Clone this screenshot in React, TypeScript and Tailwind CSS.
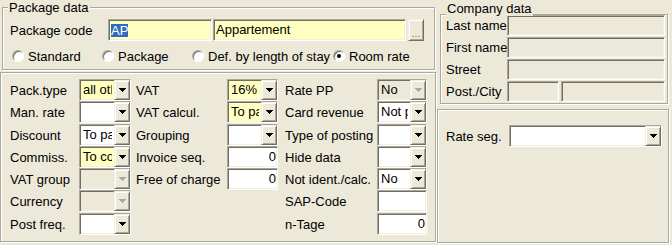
import React from "react";

const sunken =
  "border border-t-[#ACA899] border-l-[#ACA899] border-b-white border-r-white shadow-[inset_1px_1px_0_#716F64,inset_-1px_-1px_0_#F1EFE2]";
const raised =
  "border border-t-[#F1EFE2] border-l-[#F1EFE2] border-b-[#716F64] border-r-[#716F64] shadow-[inset_1px_1px_0_#ffffff,inset_-1px_-1px_0_#ACA899]";
const etched =
  "border border-[#ACA899] shadow-[inset_1px_1px_0_#ffffff,1px_1px_0_#ffffff]";

function Arrow({ disabled }: { disabled?: boolean }) {
  return (
    <svg width="7" height="4" shapeRendering="crispEdges">
      <path d="M0 0h7v1H0zM1 1h5v1H1zM2 2h3v1H2zM3 3h1v1H3z" fill={disabled ? "#ACA899" : "#000000"} />
    </svg>
  );
}

function Combo({
  value = "",
  bg = "bg-white",
  w,
  disabled,
}: {
  value?: string;
  bg?: string;
  w: string;
  disabled?: boolean;
}) {
  return (
    <div className={`flex h-[22px] shrink-0 ${w} ${sunken} ${bg}`}>
      <span className="mr-[2px] min-w-0 flex-1 overflow-hidden whitespace-nowrap pl-[3px] leading-[20px]">{value}</span>
      <span className={`flex w-[16px] shrink-0 items-center justify-center bg-[#ECE9D8] ${raised}`}>
        <Arrow disabled={disabled} />
      </span>
    </div>
  );
}

function TextBox({ value = "", w, bg = "bg-white" }: { value?: string; w: string; bg?: string }) {
  return (
    <div className={`h-[22px] shrink-0 overflow-hidden whitespace-nowrap pr-[1px] text-right leading-[20px] ${w} ${sunken} ${bg}`}>
      {value}
    </div>
  );
}

function Radio({ label, checked, w }: { label: string; checked?: boolean; w: string }) {
  return (
    <div className={`flex items-center ${w}`}>
      <span className="flex h-[12px] w-[12px] shrink-0 items-center justify-center rounded-full border border-t-[#ACA899] border-l-[#ACA899] border-b-white border-r-white bg-white shadow-[inset_1px_1px_0_#716F64]">
        {checked && <span className="block h-[4px] w-[4px] rounded-full bg-black" />}
      </span>
      <span className="ml-[4px] whitespace-nowrap">{label}</span>
    </div>
  );
}

type Field = { label: string; el: React.ReactNode };

function Column({ fields, labelW, ml }: { fields: Field[]; labelW: string; ml: string }) {
  return (
    <div className={`flex flex-col ${ml}`}>
      {fields.map((f, i) => (
        <div key={i} className={`flex h-[22px] items-center ${i === 2 || i === 6 ? "mt-[1px]" : ""}`}>
          <span className={`shrink-0 whitespace-nowrap ${labelW}`}>{f.label}</span>
          {f.el}
        </div>
      ))}
    </div>
  );
}

export default function App() {
  const col1: Field[] = [
    { label: "Pack.type", el: <Combo w="w-[52px]" bg="bg-[#FFFFC0]" value="all other" /> },
    { label: "Man. rate", el: <Combo w="w-[52px]" /> },
    { label: "Discount", el: <Combo w="w-[52px]" value="To pay" /> },
    { label: "Commiss.", el: <Combo w="w-[52px]" bg="bg-[#FFFFC0]" value="To comm." /> },
    { label: "VAT group", el: <Combo w="w-[52px]" bg="bg-[#ECE9D8]" disabled /> },
    { label: "Currency", el: <Combo w="w-[52px]" bg="bg-[#ECE9D8]" disabled /> },
    { label: "Post freq.", el: <Combo w="w-[52px]" /> },
  ];
  const col2: Field[] = [
    { label: "VAT", el: <Combo w="w-[51px]" bg="bg-[#FFFFC0]" value="16%" /> },
    { label: "VAT calcul.", el: <Combo w="w-[51px]" bg="bg-[#FFFFC0]" value="To pay" /> },
    { label: "Grouping", el: <Combo w="w-[51px]" /> },
    { label: "Invoice seq.", el: <TextBox w="w-[51px]" value="0" /> },
    { label: "Free of charge", el: <TextBox w="w-[51px]" value="0" /> },
  ];
  const col3: Field[] = [
    { label: "Rate PP", el: <Combo w="w-[50px]" bg="bg-[#ECE9D8]" value="No" disabled /> },
    { label: "Card revenue", el: <Combo w="w-[50px]" value="Not posted" /> },
    { label: "Type of posting", el: <Combo w="w-[50px]" /> },
    { label: "Hide data", el: <Combo w="w-[50px]" /> },
    { label: "Not ident./calc.", el: <Combo w="w-[50px]" value="No" /> },
    { label: "SAP-Code", el: <TextBox w="w-[50px]" /> },
    { label: "n-Tage", el: <TextBox w="w-[50px]" value="0" /> },
  ];

  return (
    <div className="flex h-[245px] w-[672px] overflow-hidden bg-[#ECE9D8] font-['Liberation_Sans',Arial,sans-serif] text-[13px] leading-[15px] text-black">
      {/* Left column */}
      <div className="flex w-[437px] shrink-0 flex-col">
        <fieldset className={`ml-[2px] h-[70px] w-[433px] ${etched}`}>
          <legend className="ml-[5px] bg-[#ECE9D8] px-[1px] leading-[15px]">Package data</legend>
          <div className="mt-[4px] flex items-center pl-[7px]">
            <span className="w-[98px] shrink-0">Package code</span>
            <div className={`flex h-[22px] w-[104px] items-center pl-[2px] ${sunken} bg-[#FFFFC0]`}>
              <span className="inline-block bg-[#316AC5] leading-[13px] text-white">AP</span>
            </div>
            <div className={`ml-[1px] h-[22px] w-[193px] pl-[2px] leading-[20px] ${sunken} bg-[#FFFFC0]`}>
              Appartement
            </div>
            <div className={`ml-[2px] flex h-[22px] w-[16px] items-end justify-center pb-[3px] ${raised} bg-[#ECE9D8]`}>
              <span className="text-[11px] leading-[8px] text-[#B07830]">...</span>
            </div>
          </div>
          <div className="mt-[8px] flex h-[14px] items-center pl-[9px]">
            <Radio w="w-[90px]" label="Standard" />
            <Radio w="w-[90px]" label="Package" />
            <Radio w="w-[141px]" label="Def. by length of stay" />
            <Radio w="w-[80px]" label="Room rate" checked />
          </div>
        </fieldset>

        <div className={`mt-[2px] flex h-[170px] w-[436px] pt-[6px] ${etched}`}>
          <Column fields={col1} labelW="w-[69px]" ml="ml-[9px]" />
          <Column fields={col2} labelW="w-[91px]" ml="ml-[5px]" />
          <Column fields={col3} labelW="w-[92px]" ml="ml-[7px]" />
        </div>
      </div>

      {/* Right column */}
      <div className="flex flex-1 flex-col">
        <div className={`relative ml-[3px] mt-[14px] h-[90px] w-[228px] pl-[5px] ${etched}`}>
          <span className="absolute left-[5px] top-[-14px] bg-[#ECE9D8] px-[1px] leading-[15px]">Company data</span>
          <div className="flex flex-col gap-[1px]">
            {["Last name", "First name", "Street"].map((l) => (
              <div key={l} className="flex h-[21px] items-center">
                <span className="w-[61px] shrink-0 whitespace-nowrap">{l}</span>
                <div className={`h-[21px] w-[158px] ${sunken}`} />
              </div>
            ))}
            <div className="flex h-[21px] items-center">
              <span className="w-[61px] shrink-0 whitespace-nowrap">Post./City</span>
              <div className={`h-[21px] w-[52px] ${sunken}`} />
              <div className={`ml-[2px] h-[21px] w-[104px] ${sunken}`} />
            </div>
          </div>
        </div>

        <div className={`mt-[5px] h-[134px] w-[232px] pl-[8px] pt-[15px] ${etched}`}>
          <div className="flex h-[22px] items-center">
            <span className="w-[63px] shrink-0 whitespace-nowrap">Rate seg.</span>
            <Combo w="w-[153px]" />
          </div>
        </div>
      </div>
    </div>
  );
}
